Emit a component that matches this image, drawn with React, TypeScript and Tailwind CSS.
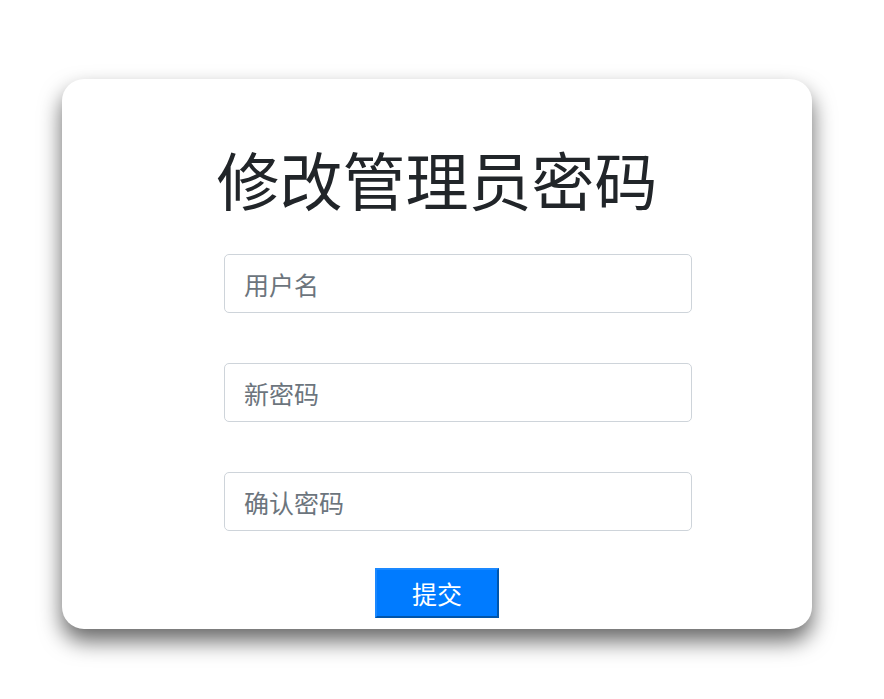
export default function App() {
  const field =
    "block w-[468px] h-[59px] ml-[162px] px-[19px] rounded-[5px] border border-[#ced4da] bg-white text-[25px] text-[#495057] placeholder:text-[#6c757d] outline-none";

  return (
    <div className="min-h-[699px] bg-white pt-[79px] pl-[62px] font-['Noto_Sans_CJK_SC',sans-serif]">
      <div className="w-[750px] h-[550px] rounded-[22px] bg-white shadow-[0_12px_22px_rgba(0,0,0,0.6)] overflow-hidden">
        <h1 className="pt-[62px] text-center text-[63px] leading-[74px] text-[#212529] font-normal">
          修改管理员密码
        </h1>
        <form className="mt-[39px] flex flex-col gap-[50px]">
          <input className={field} placeholder="用户名" />
          <input className={field} type="password" placeholder="新密码" />
          <input className={field} type="password" placeholder="确认密码" />
        </form>
        <div className="mt-[37px] flex justify-center">
          <button className="w-[124px] h-[50px] border-2 border-t-[#1a88ff] border-l-[#1a88ff] border-r-[#0055aa] border-b-[#0055aa] bg-[#007bff] text-white text-[25px] leading-none">
            提交
          </button>
        </div>
      </div>
    </div>
  );
}
